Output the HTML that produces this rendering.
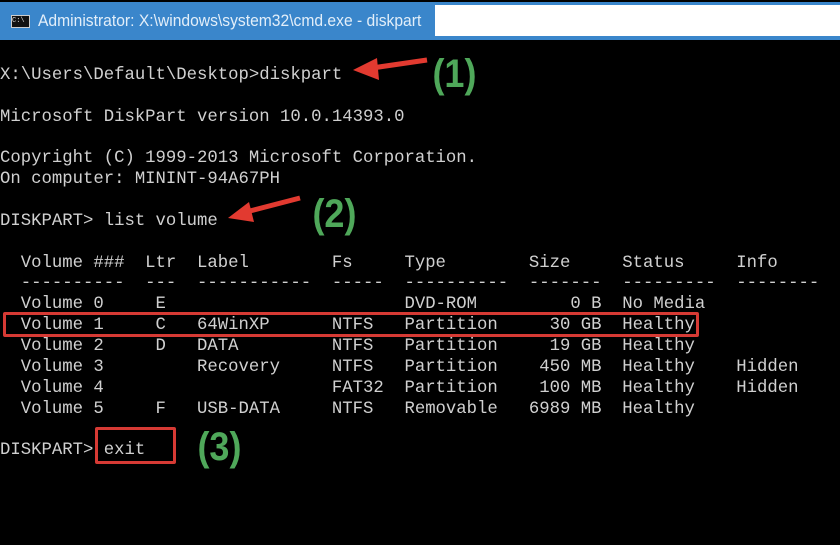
<!DOCTYPE html>
<html><head><style>
html,body{margin:0;padding:0;width:840px;height:545px;background:#000;overflow:hidden;position:relative}
.tb{position:absolute;left:0;top:2px;width:840px;height:38px;background:#3a86cb}
.wp{position:absolute;left:435px;top:5px;width:405px;height:31px;background:#fff}
.ic{position:absolute;left:11px;top:15px;width:17px;height:11px;background:#111;border:1px solid #ccc;color:#ddd;font:7px "Liberation Mono",monospace;line-height:11px}
.tt{position:absolute;left:38px;top:11px;font:17px "Liberation Sans",sans-serif;color:#e2eef9;white-space:nowrap;transform-origin:0 0;transform:scaleX(0.92)}
pre{position:absolute;left:0;top:66px;margin:0;font:17.3px/20.85px "Liberation Mono",monospace;color:#d0d0d0}
.box{position:absolute;border:3px solid #d63a34;border-radius:2px}
.g{position:absolute;font:bold 40px "Liberation Sans",sans-serif;color:#4fa85a;transform:scaleX(0.9)}
svg{position:absolute;left:0;top:0}
</style></head><body>
<div class="tb"></div><div class="wp"></div>
<div class="ic">C:\</div>
<div class="tt">Administrator: X:\windows\system32\cmd.exe - diskpart</div>
<pre>X:\Users\Default\Desktop>diskpart

Microsoft DiskPart version 10.0.14393.0

Copyright (C) 1999-2013 Microsoft Corporation.
On computer: MININT-94A67PH

DISKPART> list volume

  Volume ###  Ltr  Label        Fs     Type        Size     Status     Info
  ----------  ---  -----------  -----  ----------  -------  ---------  --------
  Volume 0     E                       DVD-ROM         0 B  No Media
  Volume 1     C   64WinXP      NTFS   Partition     30 GB  Healthy
  Volume 2     D   DATA         NTFS   Partition     19 GB  Healthy
  Volume 3         Recovery     NTFS   Partition    450 MB  Healthy    Hidden
  Volume 4                      FAT32  Partition    100 MB  Healthy    Hidden
  Volume 5     F   USB-DATA     NTFS   Removable   6989 MB  Healthy

DISKPART> exit</pre>
<div class="box" style="left:3px;top:312px;width:690px;height:19px"></div>
<div class="box" style="left:95px;top:427px;width:75px;height:31px"></div>
<svg width="840" height="545">
<path d="M427 60 L372 68" stroke="#e23a30" stroke-width="5" fill="none"/>
<path d="M353 70 L377 58 L379 80 Z" fill="#e23a30"/>
<path d="M300 198 L246 212" stroke="#e23a30" stroke-width="5" fill="none"/>
<path d="M228 218 L249 202 L254 222 Z" fill="#e23a30"/>
</svg>
<div class="g" style="left:430px;top:52px">(1)</div>
<div class="g" style="left:310px;top:192px">(2)</div>
<div class="g" style="left:195px;top:425px">(3)</div>
</body></html>
